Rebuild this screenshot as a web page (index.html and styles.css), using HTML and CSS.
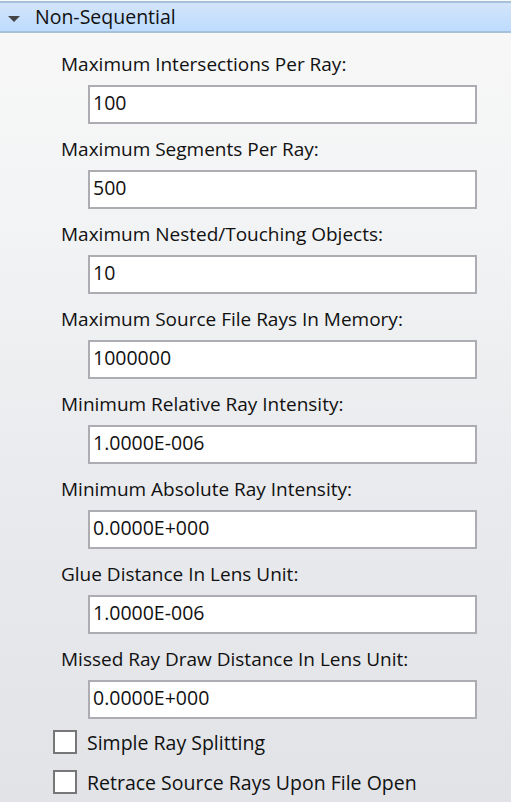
FILE: index.html
```html
<!DOCTYPE html>
<html>
<head>
<meta charset="utf-8">
<link rel="stylesheet" href="styles.css">
</head>
<body>
<div class="panel">
  <div class="header">
    <span class="caret"></span>
    <span class="title">Non-Sequential</span>
  </div>
  <div class="content">
    <div class="field">
      <div class="label">Maximum Intersections Per Ray:</div>
      <div class="input">100</div>
    </div>
    <div class="field">
      <div class="label">Maximum Segments Per Ray:</div>
      <div class="input">500</div>
    </div>
    <div class="field">
      <div class="label">Maximum Nested/Touching Objects:</div>
      <div class="input">10</div>
    </div>
    <div class="field">
      <div class="label">Maximum Source File Rays In Memory:</div>
      <div class="input">1000000</div>
    </div>
    <div class="field">
      <div class="label">Minimum Relative Ray Intensity:</div>
      <div class="input">1.0000E-006</div>
    </div>
    <div class="field">
      <div class="label">Minimum Absolute Ray Intensity:</div>
      <div class="input">0.0000E+000</div>
    </div>
    <div class="field">
      <div class="label">Glue Distance In Lens Unit:</div>
      <div class="input">1.0000E-006</div>
    </div>
    <div class="field">
      <div class="label">Missed Ray Draw Distance In Lens Unit:</div>
      <div class="input">0.0000E+000</div>
    </div>
    <div class="checks">
      <div class="check"><span class="box"></span><span class="check-label">Simple Ray Splitting</span></div>
      <div class="check"><span class="box"></span><span class="check-label">Retrace Source Rays Upon File Open</span></div>
    </div>
  </div>
</div>
</body>
</html>
```

FILE: styles.css
```css
html, body {
  margin: 0;
  padding: 0;
}
body {
  width: 511px;
  height: 802px;
  overflow: hidden;
  font-family: "Open Sans", "Noto Sans", sans-serif;
  font-size: 19.5px;
  color: #111;
  background: #f7f7f7;
}
.panel {
  height: 802px;
  padding-top: 1px;
  box-sizing: border-box;
  background: linear-gradient(to bottom, #f8f8f8 0px, #f3f4f5 200px, #e9eaed 500px, #e1e3e7 802px);
}
.header {
  height: 28px;
  border-top: 2px solid #a8c1da;
  border-bottom: 2px solid #a8c1da;
  background: linear-gradient(to bottom, #d3e4fa, #bddcff);
  display: flex;
  align-items: center;
}
.caret {
  width: 0;
  height: 0;
  margin-left: 8px;
  margin-top: 3px;
  border-left: 6px solid transparent;
  border-right: 6px solid transparent;
  border-top: 6px solid #444;
}
.title {
  margin-left: 15px;
  line-height: 28px;
}
.content {
  padding: 19px 0 0 61px;
}
.field {
  margin-bottom: 13px;
}
.label {
  height: 24px;
  line-height: 24px;
  margin-bottom: 9px;
  font-size: 19px;
  white-space: nowrap;
}
.input {
  margin-left: 27px;
  width: 389px;
  height: 39px;
  box-sizing: border-box;
  border: 2px solid #acacb2;
  background: #fff;
  padding-left: 3px;
  line-height: 32px;
}
.checks {
  margin-top: -2px;
  margin-left: -8px;
}
.check {
  display: flex;
  align-items: center;
  height: 24px;
  margin-bottom: 16px;
}
.box {
  width: 24px;
  height: 24px;
  box-sizing: border-box;
  border: 2px solid #777;
  background: #fff;
}
.check-label {
  margin-left: 10px;
  white-space: nowrap;
}
```
